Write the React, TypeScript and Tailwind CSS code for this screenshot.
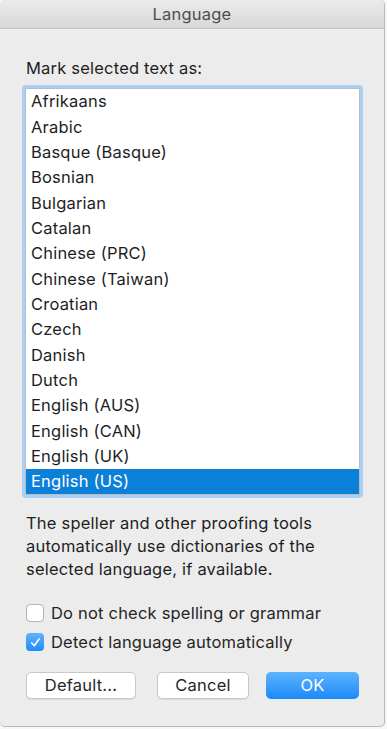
import React from "react";

const languages = [
  "Afrikaans",
  "Arabic",
  "Basque (Basque)",
  "Bosnian",
  "Bulgarian",
  "Catalan",
  "Chinese (PRC)",
  "Chinese (Taiwan)",
  "Croatian",
  "Czech",
  "Danish",
  "Dutch",
  "English (AUS)",
  "English (CAN)",
  "English (UK)",
  "English (US)",
];

const font = { fontFamily: "Inter, 'Noto Sans', sans-serif" };

const Checkbox: React.FC<{ checked?: boolean; label: string }> = ({ checked, label }) => (
  <div className="flex h-[20px] items-center gap-[7px]">
    {checked ? (
      <span className="flex h-[18px] w-[18px] items-center justify-center rounded-[4px] bg-gradient-to-b from-[#5db4fc] to-[#1b8cf9]">
        <svg viewBox="0 0 16 16" className="h-[13px] w-[13px]" fill="none" stroke="white" strokeWidth={2} strokeLinecap="round" strokeLinejoin="round">
          <path d="M3.5 8.5l3 3.5 6-8.5" />
        </svg>
      </span>
    ) : (
      <span className="h-[18px] w-[18px] rounded-[4px] border border-[#b4b4b4] bg-white" />
    )}
    <span className="text-[16.5px] tracking-[0.2px] text-[#262626]">{label}</span>
  </div>
);

export default function App() {
  return (
    <div className="h-[729px] w-[387px] bg-[#f6f6f6]" style={font}>
      <div className="flex h-[727px] w-[385px] flex-col overflow-hidden rounded-b-[5px] rounded-t-[5px] border-r border-b border-[#b9b9b9] bg-[#ececec]">
        <div className="flex h-[29px] shrink-0 items-center justify-center border-b border-[#c4c4c4] bg-gradient-to-b from-[#ebebeb] to-[#d8d8d8]">
          <span className="text-[16.5px] tracking-[0.2px] text-[#4d4d4d]">Language</span>
        </div>

        <div className="flex flex-col px-[22px] pt-[29px]">
          <div className="pl-[4px] text-[16.5px] leading-[20px] tracking-[0.2px] text-[#1e1e1e]">Mark selected text as:</div>

          <div className="mt-[7px] w-[341px] rounded-[4px] border-[3px] border-[#a8d0f6]">
            <div className="border border-[#bdbdbd] bg-white">
              {languages.map((lang, i) => {
                const selected = i === languages.length - 1;
                return (
                  <div
                    key={lang}
                    className={
                      selected
                        ? "flex h-[25.33px] items-center bg-[#0b80d9] pl-[5px] text-[16.5px] tracking-[0.2px] text-white"
                        : "flex h-[25.33px] items-center pl-[5px] text-[16.5px] tracking-[0.2px] text-[#1e1e1e]"
                    }
                  >
                    {lang}
                  </div>
                );
              })}
            </div>
          </div>

          <p className="mt-[14px] pl-[4px] text-[16.5px] leading-[23px] tracking-[0.2px] text-[#1e1e1e]">
            The speller and other proofing tools
            <br />
            automatically use dictionaries of the
            <br />
            selected language, if available.
          </p>

          <div className="mt-[22px] flex flex-col gap-[9px] pl-[4px]">
            <Checkbox label="Do not check spelling or grammar" />
            <Checkbox checked label="Detect language automatically" />
          </div>

          <div className="mt-[20px] flex items-center pl-[4px]">
            <button className="h-[27px] w-[110px] rounded-[5px] border border-[#c8c8c8] bg-white text-[16.5px] tracking-[0.2px] text-[#262626] shadow-[0_1px_1px_rgba(0,0,0,0.08)]">
              Default...
            </button>
            <button className="ml-[21px] h-[27px] w-[92px] rounded-[5px] border border-[#c8c8c8] bg-white text-[16.5px] tracking-[0.2px] text-[#262626] shadow-[0_1px_1px_rgba(0,0,0,0.08)]">
              Cancel
            </button>
            <button className="ml-[17px] h-[27px] w-[93px] rounded-[5px] bg-gradient-to-b from-[#5bb3fc] to-[#1689fa] text-[16.5px] tracking-[0.2px] text-white">
              OK
            </button>
          </div>
        </div>
      </div>
    </div>
  );
}
